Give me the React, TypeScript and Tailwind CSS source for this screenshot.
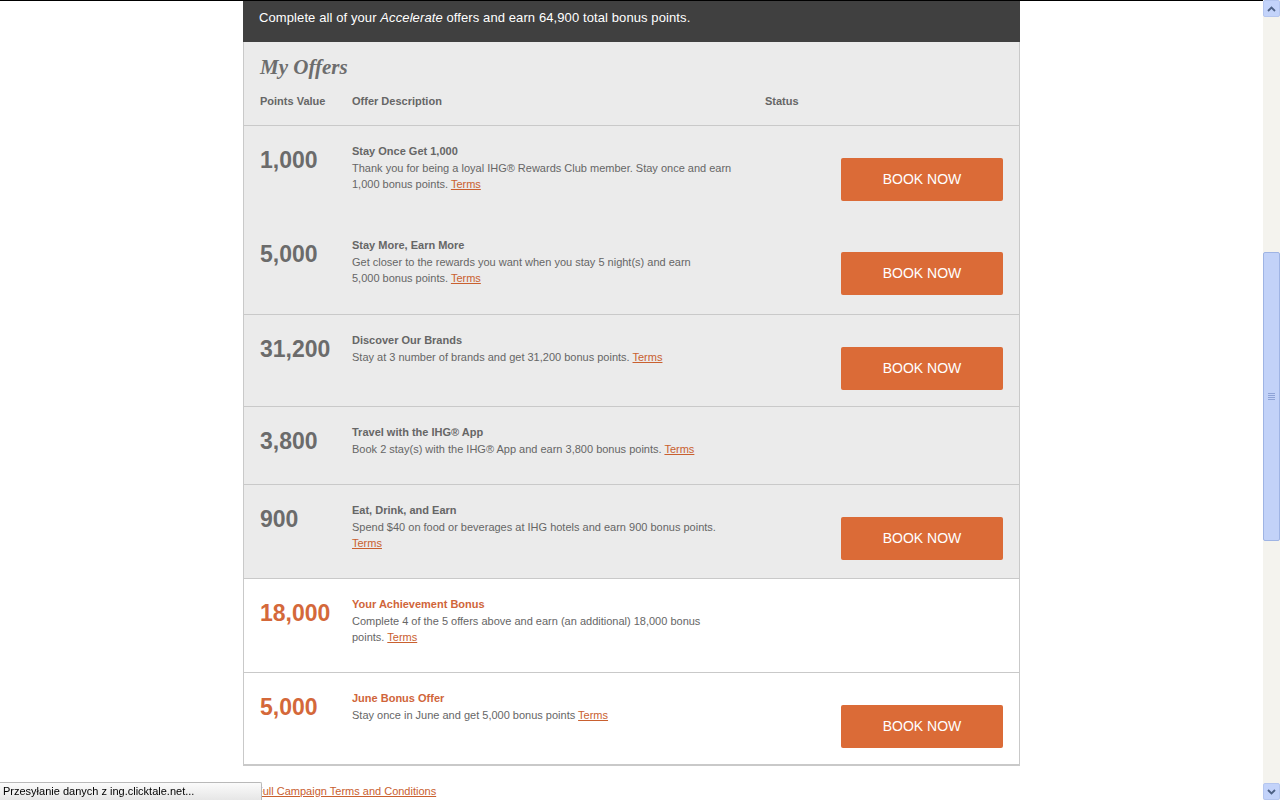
import type { ReactNode } from "react";

interface Offer {
  points: string;
  title: string;
  desc: ReactNode;
  book: boolean;
  bonus?: boolean;
  divider: boolean;
  tall?: boolean;
}

function Terms() {
  return <a className="cursor-pointer text-[#c9602f] underline">Terms</a>;
}

const OFFERS: Offer[] = [
  {
    points: "1,000",
    title: "Stay Once Get 1,000",
    desc: (
      <>
        Thank you for being a loyal IHG® Rewards Club member. Stay once and earn
        <br />
        1,000 bonus points. <Terms />
      </>
    ),
    book: true,
    divider: false,
  },
  {
    points: "5,000",
    title: "Stay More, Earn More",
    desc: (
      <>
        Get closer to the rewards you want when you stay 5 night(s) and earn
        <br />
        5,000 bonus points. <Terms />
      </>
    ),
    book: true,
    divider: true,
    tall: true,
  },
  {
    points: "31,200",
    title: "Discover Our Brands",
    desc: (
      <>
        Stay at 3 number of brands and get 31,200 bonus points. <Terms />
      </>
    ),
    book: true,
    divider: true,
  },
  {
    points: "3,800",
    title: "Travel with the IHG® App",
    desc: (
      <>
        Book 2 stay(s) with the IHG® App and earn 3,800 bonus points. <Terms />
      </>
    ),
    book: false,
    divider: true,
  },
  {
    points: "900",
    title: "Eat, Drink, and Earn",
    desc: (
      <>
        Spend $40 on food or beverages at IHG hotels and earn 900 bonus points.
        <br />
        <Terms />
      </>
    ),
    book: true,
    divider: true,
  },
  {
    points: "18,000",
    title: "Your Achievement Bonus",
    desc: (
      <>
        Complete 4 of the 5 offers above and earn (an additional) 18,000 bonus
        <br />
        points. <Terms />
      </>
    ),
    book: false,
    bonus: true,
    divider: true,
  },
  {
    points: "5,000",
    title: "June Bonus Offer",
    desc: (
      <>
        Stay once in June and get 5,000 bonus points <Terms />
      </>
    ),
    book: true,
    bonus: true,
    divider: true,
  },
];

function OfferRow({ offer }: { offer: Offer }) {
  return (
    <div
      className={
        "flex border-b pt-[17px] pl-4 " +
        (offer.tall ? "pb-[17px] " : "pb-[16px] ") +
        (offer.bonus ? "bg-white " : "bg-[#ebebeb] ") +
        (offer.divider ? "border-[#c9c9c9]" : "border-[#ebebeb]")
      }
    >
      <div
        className={
          "w-[92px] text-[23px] leading-[34px] font-bold " +
          (offer.bonus ? "text-[#d4683a]" : "text-[#6b6b6b]")
        }
      >
        {offer.points}
      </div>
      <div className="mb-[11px] w-[400px] text-[11px] leading-[16px] whitespace-nowrap">
        <div className={"mb-px font-bold " + (offer.bonus ? "text-[#d0653a]" : "text-[#666]")}>
          {offer.title}
        </div>
        <div className="text-[#666]">{offer.desc}</div>
      </div>
      <div className="flex-1" />
      {offer.book ? (
        <button
          type="button"
          className="mt-[15px] mr-4 h-[43px] w-[162px] rounded-[2px] bg-[#db6b37] text-[14px] text-white"
        >
          BOOK NOW
        </button>
      ) : null}
    </div>
  );
}

function ScrollArrow({ up }: { up: boolean }) {
  return (
    <div className="flex h-[17px] w-[17px] items-center justify-center rounded-[2px] border border-[#b5c6ef] bg-[#c3d3fa]">
      <svg width="9" height="6" viewBox="0 0 9 6">
        <path
          d={up ? "M1 5 L4.5 1.5 L8 5" : "M1 1 L4.5 4.5 L8 1"}
          fill="none"
          stroke="#4d6185"
          strokeWidth="1.8"
        />
      </svg>
    </div>
  );
}

export default function App() {
  return (
    <div className="min-h-screen bg-white pr-[17px] font-['Liberation_Sans',Arial,sans-serif]">
      <div className="h-px bg-black" />
      <div className="mx-auto w-[777px]">
        <div className="h-[41px] bg-[#404040] pt-[9px] pl-4 text-[13px] leading-[16px] tracking-[0.1px] text-white">
          Complete all of your <i>Accelerate</i> offers and earn 64,900 total bonus points.
        </div>
        <div className="border-x border-b border-[#c9c9c9]">
          <div className="border-b border-[#c9c9c9] bg-[#ebebeb] pt-[13px] pb-[16px] pl-4">
            <h2 className="font-['Liberation_Serif',Georgia,serif] text-[21px] leading-[24px] font-bold text-[#6d6d6d] italic">
              My Offers
            </h2>
            <div className="mt-[14px] flex text-[11px] leading-[16px] font-bold text-[#666]">
              <div className="w-[92px]">Points Value</div>
              <div className="w-[413px]">Offer Description</div>
              <div>Status</div>
            </div>
          </div>
          {OFFERS.map((o, i) => (
            <OfferRow key={i} offer={o} />
          ))}
        </div>
        <div className="mt-[17px] pb-10 pl-[13px] text-[11px] leading-[16px]">
          <a className="cursor-pointer text-[#c9602f] underline">Full Campaign Terms and Conditions</a>
        </div>
      </div>

      {/* browser chrome: scrollbar */}
      <div className="fixed top-0 right-0 flex h-screen w-[17px] flex-col bg-[#f4f3ee]">
        <ScrollArrow up />
        <div className="relative flex-1">
          <div className="absolute top-[235px] left-0 flex h-[289px] w-[17px] items-center justify-center rounded-[2px] border border-[#9fb4e4] bg-[#c2d2f8]">
            <div className="flex flex-col gap-px">
              <div className="h-px w-[7px] bg-[#8ea3d6]" />
              <div className="h-px w-[7px] bg-[#8ea3d6]" />
              <div className="h-px w-[7px] bg-[#8ea3d6]" />
              <div className="h-px w-[7px] bg-[#8ea3d6]" />
            </div>
          </div>
        </div>
        <ScrollArrow up={false} />
      </div>

      {/* browser chrome: status bar */}
      <div className="fixed bottom-0 left-0 h-[18px] w-[262px] rounded-tr-[2px] border-t border-r border-[#b9b9b9] bg-gradient-to-b from-[#fbfbfb] to-[#e6e6e6] pl-[3px] text-[11px] leading-[17px] text-black">
        Przesyłanie danych z ing.clicktale.net...
      </div>
    </div>
  );
}
